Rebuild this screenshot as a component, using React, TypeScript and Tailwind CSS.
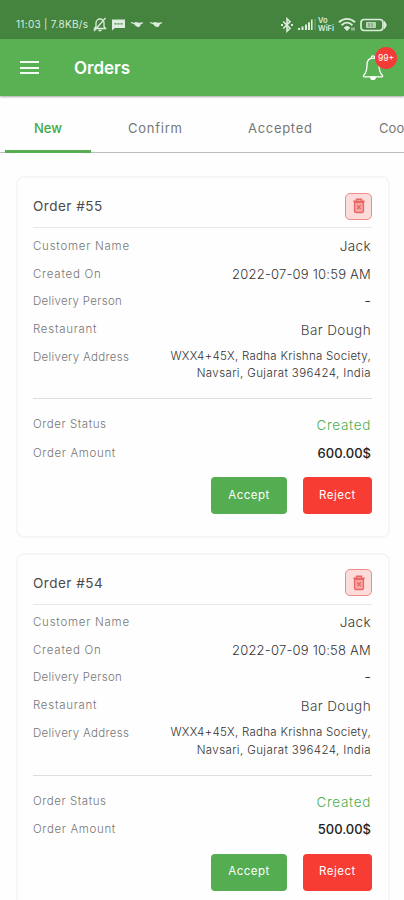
import type { ReactNode } from "react";

interface Order {
  id: number;
  customer: string;
  createdOn: string;
  restaurant: string;
  amount: string;
}

const orders: Order[] = [
  { id: 55, customer: "Jack", createdOn: "2022-07-09 10:59 AM", restaurant: "Bar Dough", amount: "600.00$" },
  { id: 54, customer: "Jack", createdOn: "2022-07-09 10:58 AM", restaurant: "Bar Dough", amount: "500.00$" },
];

function Bluetooth() {
  return (
    <svg width="14" height="16" viewBox="0 0 14 16" fill="none" stroke="currentColor" strokeWidth="1.6">
      <path d="M3.2 4.5 10 11.2 7 14.2V1.8l3 3L3.2 11.5" />
      <path d="M1 8h2M11 8h2" strokeWidth="2" />
    </svg>
  );
}

function Signal() {
  return (
    <svg width="18" height="13" viewBox="0 0 18 13" fill="currentColor">
      <path d="M0 10h2v2H0zM3.5 8.5h2V12h-2zM7 6.5h2V12H7zM10 4.3h2V12h-2zM13 1.5h1.6V12H13z" />
      <path d="M16.6 1h.8v11h-.8z" opacity=".45" />
    </svg>
  );
}

function Wifi() {
  return (
    <svg width="18" height="15" viewBox="0 0 18 15" fill="none" stroke="currentColor" strokeWidth="1.9">
      <path d="M1 5.3c4.7-4.6 11.3-4.6 16 0" />
      <path d="M3.6 8.2c3.3-3.2 7.5-3.2 10.8 0" />
      <path d="M6.2 10.8c1.7-1.6 3.9-1.6 5.6 0L9 13.5z" fill="currentColor" strokeWidth="1" />
      <path d="M14 10.5v3M16 10.5v3" strokeWidth="1" />
    </svg>
  );
}

function Battery() {
  return (
    <svg width="27" height="14" viewBox="0 0 27 14" fill="none" stroke="currentColor">
      <rect x="1" y="1.5" width="22" height="11" rx="3.2" strokeWidth="1.7" />
      <path d="M24.5 3.5 26.3 7l-1.8 3.5z" fill="currentColor" />
      <rect x="6" y="4" width="10" height="6" rx="1" fill="currentColor" stroke="none" opacity=".75" />
      <path d="M9 5v4M12 5v4" stroke="#438340" strokeWidth=".8" />
    </svg>
  );
}

function MutedBell() {
  return (
    <svg width="14" height="15" viewBox="0 0 14 15" fill="none" stroke="currentColor" strokeWidth="1.3">
      <path d="M1.5 11.5h11L11 9.5V6a4 4 0 0 0-8 0v3.5zM5.5 13.5h3M12.5 1 1 14" />
    </svg>
  );
}

function Message() {
  return (
    <svg width="13" height="12" viewBox="0 0 13 12">
      <path d="M0 .5h13V9H3l-3 2.5z" fill="currentColor" />
      <path d="M2.5 4.8h2M5.5 4.8h2M8.5 4.8h2" stroke="#438340" strokeWidth="1.3" />
    </svg>
  );
}

function Handshake() {
  return (
    <svg width="12" height="8" viewBox="0 0 12 8" fill="currentColor">
      <path d="M0 1 3 1.700 5 1l3 .8 4-.6v1L9.800 3.200 9.300 5 7.500 6.200 5 5.200 3.200 3.200 0 2z" />
    </svg>
  );
}

function NotificationBell() {
  return (
    <svg width="22" height="26" viewBox="0 0 22 26" fill="none" stroke="currentColor" strokeWidth="1.3" strokeLinejoin="round">
      <path d="M9.4 3.2V2.4a1.6 1.6 0 0 1 3.2 0v.8" />
      <path d="M11 3.2c-4 0-6 3-6 6.800 0 5.500-1.200 8.200-3.300 10.300-.5.600-.4 1.500.6 1.500h17.400c1 0 1.100-.9.600-1.500C18.200 18.200 17 15.500 17 10c0-3.800-2-6.800-6-6.800z" />
      <path d="M8.800 22.200a2.200 2.200 0 0 0 4.400 0z" fill="currentColor" />
    </svg>
  );
}

function Trash() {
  return (
    <svg width="14" height="16" viewBox="0 0 14 16" fill="none" stroke="#ea6564" strokeWidth="1.4">
      <path d="M1.3 3.2h11.4M4.5 2.800V1.300h5v1.500" />
      <path d="M2.6 4.2h8.800v9a1.300 1.300 0 0 1-1.300 1.300H3.900a1.300 1.300 0 0 1-1.300-1.300z" fill="#f7a8a6" />
      <path d="m5.200 7.200 3.600 3.900M8.800 7.200l-3.600 3.900" />
    </svg>
  );
}

function Row({ label, labelClass, className, children }: { label: string; labelClass: string; className: string; children: ReactNode }) {
  return (
    <div className={`flex items-start justify-between pr-px ${className}`}>
      <span className={`text-[11.5px] font-light leading-[18px] text-[#777] ${labelClass}`}>{label}</span>
      {children}
    </div>
  );
}

function OrderCard({ order }: { order: Order }) {
  return (
    <article className="h-[362px] shrink-0 rounded-lg border-2 border-[#f6f6f6] bg-[#fefefe] pl-[15px] pr-4">
      <div className="flex h-[50px] items-center justify-between border-b border-[#e8e8e8] pt-[7px]">
        <h2 className="text-[13.5px] leading-5 tracking-[0.5px] text-[#4b4b4b]">Order #{order.id}</h2>
        <button aria-label="Delete order" className="flex size-[27px] items-center justify-center rounded-[5px] border border-[#ee8b89] bg-[#fcdcda]">
          <Trash />
        </button>
      </div>
      <div className="h-[170px] pt-[8.5px]">
        <Row label="Customer Name" labelClass="tracking-[0.75px]" className="h-7">
          <span className="text-[13.5px] font-light leading-[18px] tracking-[0.35px] text-[#333]">{order.customer}</span>
        </Row>
        <Row label="Created On" labelClass="tracking-[0.75px]" className="h-[27px]">
          <span className="text-[13px] font-light leading-[18px] tracking-[0.22px] text-[#333]">{order.createdOn}</span>
        </Row>
        <Row label="Delivery Person" labelClass="tracking-[0.3px]" className="h-7">
          <span className="text-[15px] font-light leading-[18px] text-[#333]">-</span>
        </Row>
        <Row label="Restaurant" labelClass="tracking-[0.72px]" className="h-7">
          <span className="pt-px text-[13.5px] font-light leading-[18px] tracking-[0.4px] text-[#444]">{order.restaurant}</span>
        </Row>
        <Row label="Delivery Address" labelClass="tracking-[0.33px]" className="h-10">
          <p className="whitespace-nowrap text-right text-[11.5px] font-light leading-[17.5px] text-[#333]">
            <span className="tracking-[0.28px]">WXX4+45X, Radha Krishna Society,</span>
            <br />
            <span className="tracking-[0.4px]">Navsari, Gujarat 396424, India</span>
          </p>
        </Row>
      </div>
      <div className="border-t border-[#dedede] pt-[16px]">
        <Row label="Order Status" labelClass="tracking-[0.56px]" className="h-[28.5px]">
          <span className="pt-px text-[13.5px] font-light leading-[18px] tracking-[0.7px] text-[#4caf50]">Created</span>
        </Row>
        <Row label="Order Amount" labelClass="tracking-[0.64px]" className="h-[33.5px]">
          <span className="text-[13px] font-medium leading-[18px] text-[#222]">{order.amount}</span>
        </Row>
        <div className="flex justify-end gap-4">
          <button className="h-[37px] w-[76px] rounded bg-[#54ad50] text-[11.5px] tracking-[0.5px] text-white">Accept</button>
          <button className="h-[37px] w-[69px] rounded bg-[#f63c33] text-[11.5px] tracking-[0.5px] text-white">Reject</button>
        </div>
      </div>
    </article>
  );
}

export default function App() {
  return (
    <div className="flex h-[900px] w-[404px] flex-col overflow-hidden bg-[#fefefe] font-['Inter',sans-serif]">
      <div className="flex h-[39px] shrink-0 items-center bg-[#44843f] pl-4 pr-[17px] pt-[10px] text-[#ddecdc]">
        <span className="w-[75px] whitespace-nowrap text-[10px] tracking-[0.3px]">11:03 | 7.8KB/s</span>
        <div className="ml-[2px] flex items-center">
          <MutedBell />
          <span className="ml-[5px]"><Message /></span>
          <span className="ml-[6px]"><Handshake /></span>
          <span className="ml-[7px]"><Handshake /></span>
        </div>
        <div className="ml-auto flex items-center">
          <Bluetooth />
          <span className="ml-1"><Signal /></span>
          <div className="ml-[2px] flex w-[17px] flex-col text-[7.5px] font-semibold leading-none">
            <span className="h-[8px]">Vo</span>
            <span className="h-[8px]">WiFi</span>
          </div>
          <span className="ml-[3px]"><Wifi /></span>
          <span className="ml-[4px]"><Battery /></span>
        </div>
      </div>
      <header className="flex h-[57px] shrink-0 items-center bg-[#59b154] pl-5 pr-5 text-white shadow-[0_1px_2px_rgba(0,0,0,0.35)]">
        <button aria-label="Menu" className="flex w-[19px] flex-col gap-[3.5px]">
          <i className="h-[2px] bg-[#f3faf2]" />
          <i className="h-[2px] bg-[#f3faf2]" />
          <i className="h-[2px] bg-[#f3faf2]" />
        </button>
        <h1 className="ml-[35px] text-[17px] font-semibold leading-6">Orders</h1>
        <div className="relative ml-auto mt-[1px]">
          <NotificationBell />
          <span className="absolute -right-[13px] -top-[8px] flex size-[22px] items-center justify-center rounded-full bg-[#f43b35] text-[8.5px]">99+</span>
        </div>
      </header>
      <nav className="flex h-[57px] shrink-0 whitespace-nowrap border-b border-[#bdbdbd] text-[13px] leading-[64px] text-[#777]">
        <span className="-mb-px ml-[5px] w-[86px] shrink-0 border-b-[3px] border-[#55ad50] text-center font-medium text-[#43a83e]">New</span>
        <span className="ml-[37px] w-[120px] shrink-0 tracking-[0.75px]">Confirm</span>
        <span className="w-[131px] shrink-0 tracking-[0.7px]">Accepted</span>
        <span className="w-[25px] shrink-0 overflow-hidden tracking-[0.1px]">Coo</span>
      </nav>
      <main className="flex flex-col gap-[14.5px] pl-4 pr-[14px] pt-[23px]">
        {orders.map((order) => (
          <OrderCard key={order.id} order={order} />
        ))}
      </main>
    </div>
  );
}
